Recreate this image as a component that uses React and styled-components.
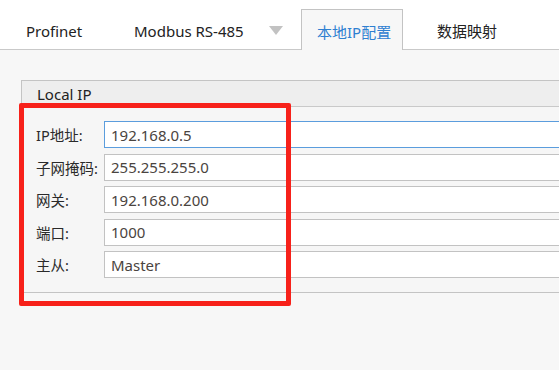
import React from 'react'
import styled, { createGlobalStyle } from 'styled-components'

const GlobalStyle = createGlobalStyle`
  html, body {
    margin: 0;
    padding: 0;
    background: #f7f7f7;
  }
  body {
    font-family: "Noto Sans", "Noto Sans CJK SC", sans-serif;
  }
`

const Window = styled.div`
  width: 559px;
  height: 370px;
  overflow: hidden;
  display: flex;
  flex-direction: column;
  background: #f7f7f7;
`

const TabBar = styled.div`
  height: 49px;
  flex-shrink: 0;
  display: flex;
  align-items: flex-end;
  padding-left: 10px;
  background: #ffffff;
  border-bottom: 1px solid #c9c9c9;
`

const Tab = styled.div`
  box-sizing: border-box;
  width: ${(p) => p.$w}px;
  margin-left: ${(p) => p.$ml || 0}px;
  height: ${(p) => (p.$active ? 41 : 40)}px;
  margin-bottom: ${(p) => (p.$active ? -1 : 0)}px;
  padding: 2px 0 0 15px;
  display: flex;
  align-items: center;
  font-size: 15px;
  color: ${(p) => (p.$active ? '#2f80d1' : '#222')};
  background: ${(p) => (p.$active ? '#f7f7f7' : 'transparent')};
  border: ${(p) => (p.$active ? '1px solid #c3c3c3' : '1px solid transparent')};
  border-bottom: none;
  white-space: nowrap;
`

const DropArrow = styled.span`
  margin-left: auto;
  margin-right: 17px;
  width: 0;
  height: 0;
  border-left: 7px solid transparent;
  border-right: 7px solid transparent;
  border-top: 9px solid #c2c2c2;
`

const Content = styled.div`
  position: relative;
  flex: 1;
  padding: 30px 0 0 21px;
`

const Group = styled.div`
  margin-right: -60px;
  border: 1px solid #c4c4c4;
  border-right: none;
  background: #f6f6f6;
`

const GroupHeader = styled.div`
  height: 25px;
  display: flex;
  align-items: center;
  padding-left: 15px;
  background: #eeeeee;
  border-bottom: 1px solid #c9c9c9;
  font-size: 15px;
  color: #222;
`

const GroupBody = styled.div`
  display: flex;
  flex-direction: column;
  gap: 5.5px;
  padding: 14px 0 14px 14px;
`

const Row = styled.div`
  display: flex;
  align-items: center;
  height: 27px;
`

const Label = styled.div`
  width: 68px;
  flex-shrink: 0;
  font-size: 14.5px;
  color: #2a2a2a;
  white-space: nowrap;
`

const Field = styled.div`
  box-sizing: border-box;
  flex: 1;
  height: 27px;
  display: flex;
  align-items: center;
  padding-left: 6px;
  background: #ffffff;
  border: 1px solid ${(p) => (p.$focused ? '#5b9ddd' : '#c2c2c2')};
  border-right: none;
  font-size: 15px;
  color: #4a4440;
`

const Highlight = styled.div`
  position: absolute;
  left: 19px;
  top: 52.5px;
  width: 272px;
  height: 203.5px;
  box-sizing: border-box;
  border: 5px solid #f7211a;
  border-radius: 2px;
  pointer-events: none;
`

const fields = [
  { label: 'IP地址:', value: '192.168.0.5', focused: true },
  { label: '子网掩码:', value: '255.255.255.0' },
  { label: '网关:', value: '192.168.0.200' },
  { label: '端口:', value: '1000' },
  { label: '主从:', value: 'Master' },
]

export default function App() {
  return (
    <Window>
      <GlobalStyle />
      <TabBar>
        <Tab $w={108}>Profinet</Tab>
        <Tab $w={183}>
          Modbus RS-485
          <DropArrow />
        </Tab>
        <Tab $w={102} $active>本地IP配置</Tab>
        <Tab $w={100} $ml={18}>数据映射</Tab>
      </TabBar>
      <Content>
        <Group>
          <GroupHeader>Local IP</GroupHeader>
          <GroupBody>
            {fields.map((f) => (
              <Row key={f.label}>
                <Label>{f.label}</Label>
                <Field $focused={f.focused}>{f.value}</Field>
              </Row>
            ))}
          </GroupBody>
        </Group>
        <Highlight />
      </Content>
    </Window>
  )
}
